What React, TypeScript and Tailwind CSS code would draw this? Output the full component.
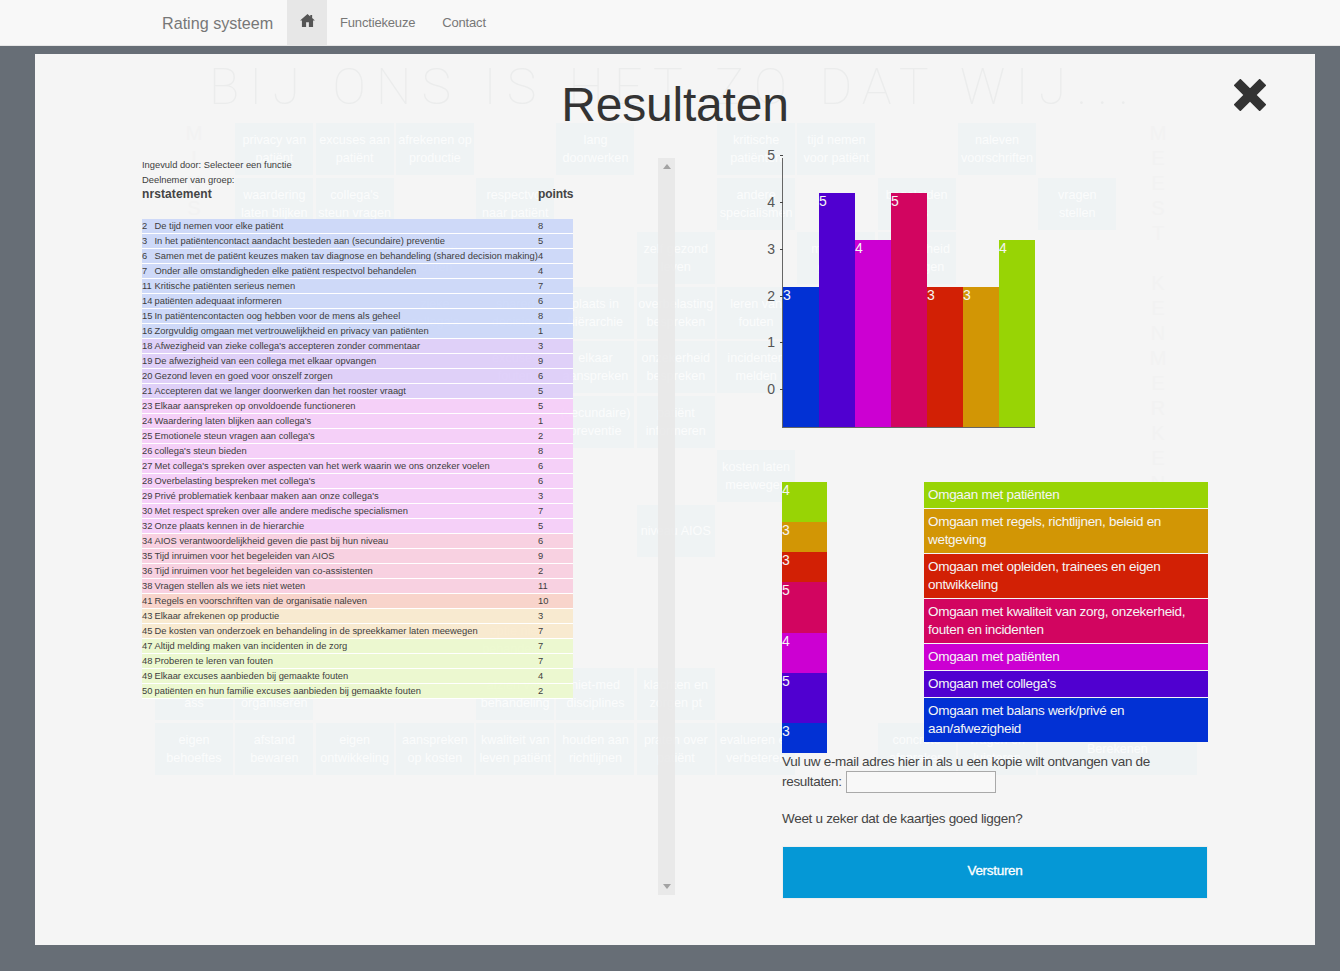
import React from "react";

const C = {
  blue: "bg-[#0231d4]",
  purple: "bg-[#5000d0]",
  magenta: "bg-[#cc00d2]",
  crimson: "bg-[#d20560]",
  red: "bg-[#d22005]",
  orange: "bg-[#d29605]",
  green: "bg-[#98d405]",
};

const R = {
  b: "bg-[#cad6f8]/90",
  p: "bg-[#ddccf8]/90",
  m: "bg-[#f5ccf8]/90",
  c: "bg-[#f8cddf]/90",
  r: "bg-[#f8d0c6]/90",
  o: "bg-[#f8e9cc]/90",
  g: "bg-[#ebf8cc]/90",
};

const rows: [string, string, string, keyof typeof R][] = [
  ["2", "De tijd nemen voor elke patiënt", "8", "b"],
  ["3", "In het patiëntencontact aandacht besteden aan (secundaire) preventie", "5", "b"],
  ["6", "Samen met de patiënt keuzes maken tav diagnose en behandeling (shared decision making)", "4", "b"],
  ["7", "Onder alle omstandigheden elke patiënt respectvol behandelen", "4", "b"],
  ["11", "Kritische patiënten serieus nemen", "7", "b"],
  ["14", "patiënten adequaat informeren", "6", "b"],
  ["15", "In patiëntencontacten oog hebben voor de mens als geheel", "8", "b"],
  ["16", "Zorgvuldig omgaan met vertrouwelijkheid en privacy van patiënten", "1", "b"],
  ["18", "Afwezigheid van zieke collega's accepteren zonder commentaar", "3", "p"],
  ["19", "De afwezigheid van een collega met elkaar opvangen", "9", "p"],
  ["20", "Gezond leven en goed voor onszelf zorgen", "6", "p"],
  ["21", "Accepteren dat we langer doorwerken dan het rooster vraagt", "5", "p"],
  ["23", "Elkaar aanspreken op onvoldoende functioneren", "5", "m"],
  ["24", "Waardering laten blijken aan collega's", "1", "m"],
  ["25", "Emotionele steun vragen aan collega's", "2", "m"],
  ["26", "collega's steun bieden", "8", "m"],
  ["27", "Met collega's spreken over aspecten van het werk waarin we ons onzeker voelen", "6", "m"],
  ["28", "Overbelasting bespreken met collega's", "6", "m"],
  ["29", "Privé problematiek kenbaar maken aan onze collega's", "3", "m"],
  ["30", "Met respect spreken over alle andere medische specialismen", "7", "m"],
  ["32", "Onze plaats kennen in de hierarchie", "5", "m"],
  ["34", "AIOS verantwoordelijkheid geven die past bij hun niveau", "6", "c"],
  ["35", "Tijd inruimen voor het begeleiden van AIOS", "9", "c"],
  ["36", "Tijd inruimen voor het begeleiden van co-assistenten", "2", "c"],
  ["38", "Vragen stellen als we iets niet weten", "11", "c"],
  ["41", "Regels en voorschriften van de organisatie naleven", "10", "r"],
  ["43", "Elkaar afrekenen op productie", "3", "o"],
  ["45", "De kosten van onderzoek en behandeling in de spreekkamer laten meewegen", "7", "o"],
  ["47", "Altijd melding maken van incidenten in de zorg", "7", "g"],
  ["48", "Proberen te leren van fouten", "7", "g"],
  ["49", "Elkaar excuses aanbieden bij gemaakte fouten", "4", "g"],
  ["50", "patiënten en hun familie excuses aanbieden bij gemaakte fouten", "2", "g"],
];

const tiles: [number, number, string, string, number?][] = [
  [1, 0, "privacy van", "patiënt"],
  [2, 0, "excuses aan", "patiënt"],
  [3, 0, "afrekenen op", "productie"],
  [5, 0, "lang", "doorwerken"],
  [7, 0, "kritische", "patiënten"],
  [8, 0, "tijd nemen", "voor patiënt"],
  [10, 0, "naleven", "voorschriften"],
  [1, 1, "waardering", "laten blijken"],
  [2, 1, "collega's", "steun vragen"],
  [4, 1, "respectvol", "naar patiënt"],
  [7, 1, "andere", "specialismen"],
  [9, 1, "begeleiden", "aios"],
  [11, 1, "vragen", "stellen"],
  [2, 2, "bespreken", "werk"],
  [3, 2, "omgaan", "fouten"],
  [6, 2, "zelf gezond", "leven"],
  [8, 2, "mens als", "geheel"],
  [9, 2, "afwezigheid", "opvangen"],
  [3, 3, "zieke", "collega's"],
  [4, 3, "shared", "decision"],
  [5, 3, "plaats in", "hiërarchie"],
  [6, 3, "overbelasting", "bespreken"],
  [7, 3, "leren van", "fouten"],
  [4, 4, "excuses", "fouten"],
  [5, 4, "elkaar", "aanspreken"],
  [6, 4, "onzekerheid", "bespreken"],
  [7, 4, "incidenten", "melden"],
  [8, 4, "collega's", "steun bieden"],
  [5, 5, "(secundaire)", "preventie"],
  [6, 5, "patiënt", "informeren"],
  [7, 6, "kosten laten", "meewegen"],
  [6, 7, "niveau AIOS", ""],
  [1, 8, "melding", "maken"],
  [4, 9, "optie niet", "behandelen"],
  [0, 10, "opleiden", "ass"],
  [1, 10, "werk", "organiseren"],
  [4, 10, "afzien van", "behandeling"],
  [5, 10, "niet-med", "disciplines"],
  [6, 10, "klachten en", "zorgen pt"],
  [0, 11, "eigen", "behoeftes"],
  [1, 11, "afstand", "bewaren"],
  [2, 11, "eigen", "ontwikkeling"],
  [3, 11, "aanspreken", "op kosten"],
  [4, 11, "kwaliteit van", "leven patiënt"],
  [5, 11, "houden aan", "richtlijnen"],
  [6, 11, "praten over", "patiënt"],
  [7, 11, "evalueren en", "verbeteren"],
  [9, 11, "concrete", "afspraken"],
  [10, 11, "vragen en", "luisteren"],
  [11, 11, "Berekenen", "", 2],
];

const bars = [
  { c: C.blue, h: "h-[140px]", v: "3" },
  { c: C.purple, h: "h-[234px]", v: "5" },
  { c: C.magenta, h: "h-[187px]", v: "4" },
  { c: C.crimson, h: "h-[234px]", v: "5" },
  { c: C.red, h: "h-[140px]", v: "3" },
  { c: C.orange, h: "h-[140px]", v: "3" },
  { c: C.green, h: "h-[187px]", v: "4" },
];

const ticks = [
  { v: "5", t: "top-[-12px]" },
  { v: "4", t: "top-[35px]" },
  { v: "3", t: "top-[82px]" },
  { v: "2", t: "top-[129px]" },
  { v: "1", t: "top-[175px]" },
  { v: "0", t: "top-[222px]" },
];

const stack = [
  { c: C.green, h: "h-[40px]", v: "4" },
  { c: C.orange, h: "h-[30px]", v: "3" },
  { c: C.red, h: "h-[30px]", v: "3" },
  { c: C.crimson, h: "h-[51px]", v: "5" },
  { c: C.magenta, h: "h-[40px]", v: "4" },
  { c: C.purple, h: "h-[50px]", v: "5" },
  { c: C.blue, h: "h-[30px]", v: "3" },
];

const legend = [
  { c: C.green, t: "Omgaan met patiënten" },
  { c: C.orange, t: "Omgaan met regels, richtlijnen, beleid en wetgeving" },
  { c: C.red, t: "Omgaan met opleiden, trainees en eigen ontwikkeling" },
  { c: C.crimson, t: "Omgaan met kwaliteit van zorg, onzekerheid, fouten en incidenten" },
  { c: C.magenta, t: "Omgaan met patiënten" },
  { c: C.purple, t: "Omgaan met collega's" },
  { c: C.blue, t: "Omgaan met balans werk/privé en aan/afwezigheid" },
];

function Ghost() {
  return (
    <div className="absolute inset-0 overflow-hidden select-none" aria-hidden="true">
      <div className="absolute left-[174px] top-[8px] whitespace-nowrap font-['Roboto',sans-serif] font-thin text-[50px] leading-[50px] tracking-[10.2px] text-[#ebecec]">
        BIJ ONS IS HET ZO DAT WIJ...
      </div>
      <div className="absolute left-[120px] top-[69px] grid grid-cols-[repeat(13,78px)] auto-rows-[52px] gap-x-[2.3px] gap-y-[2.5px]">
        {tiles.map(([c, r, a, b, span], i) => (
          <div
            key={i}
            className="flex flex-col items-center justify-center bg-[#eff3f4] text-center text-[12.6px] leading-[18px] text-[#fbfcfc] whitespace-nowrap"
            style={{ gridColumn: `${c + 1} / span ${span ?? 1}`, gridRow: r + 1 }}
          >
            <span>{a}</span>
            {b && <span>{b}</span>}
          </div>
        ))}
      </div>
      <div className="absolute left-[120px] top-[67px] flex w-[78px] flex-col items-center text-[20px] leading-[25px] text-[#f2f2f2]">
        {"MINST KENMERKEND".split("").map((l, i) => (
          <span key={i} className="h-[25px]">{l}</span>
        ))}
      </div>
      <div className="absolute left-[1084px] top-[67px] flex w-[78px] flex-col items-center text-[20px] leading-[25px] text-[#f2f2f2]">
        {"MEEST KENMERKEND".split("").map((l, i) => (
          <span key={i} className="h-[25px]">{l}</span>
        ))}
      </div>
    </div>
  );
}

export default function App() {
  return (
    <div className="flex h-[971px] w-[1340px] flex-col overflow-hidden bg-[#676e76] font-['Liberation_Sans',Arial,sans-serif] text-[#333]">
      <nav className="flex h-[46px] shrink-0 items-start border-b border-[#e7e7e7] bg-[#f8f8f8] pl-[162px] text-[#777]">
        <a className="mr-[14px] w-[111px] whitespace-nowrap text-[16.15px] leading-[47px]">Rating systeem</a>
        <a className="flex h-[45px] w-[40px] items-start justify-center bg-[#e7e7e7] pt-[14px] text-[#555]">
          <svg viewBox="0 0 16 14" className="h-[13px] w-[15px]" fill="currentColor">
            <path d="M8 0 L11 2.6 V1 H13 V4.4 L16 7 H14 V14 H9.5 V9 H6.5 V14 H2 V7 H0 Z" />
          </svg>
        </a>
        <a className="ml-[13px] text-[13px] leading-[45px] tracking-[-0.17px]">Functiekeuze</a>
        <a className="ml-[27px] text-[13px] leading-[45px] tracking-[-0.17px]">Contact</a>
      </nav>

      <div className="flex flex-1 flex-col pb-[26px] pl-[35px] pr-[25px] pt-[8px]">
        <div className="relative flex-1 bg-[#f5f5f5] pl-[107px]">
          <Ghost />
          <button className="absolute right-[49px] top-[25px] text-[#333]" aria-label="Sluiten">
            <svg viewBox="0 0 32 32" className="size-[32px]" fill="none" stroke="currentColor" strokeWidth="9.5">
              <path d="M3 3 L29 29 M29 3 L3 29" />
            </svg>
          </button>

          <div className="relative flex h-[104px] justify-center overflow-hidden pr-[107px] pt-[24px]">
            <h1 className="text-[48px] leading-[54px] text-[#333] tracking-[-0.2px]">Resultaten</h1>
          </div>

          <div className="relative flex gap-[107px]">
            <div className="flex h-[737px] w-[533px]">
              <div className="w-[516px] text-[9.35px] leading-[14px] text-[#3d3d3d]">
                <p className="h-[14.5px]">Ingevuld door: Selecteer een functie</p>
                <p className="h-[14.5px]">Deelnemer van groep:</p>
                <div className="flex h-[32px] w-[431px] items-start text-[12px] font-bold leading-[15px] text-[#444]">
                  <span className="w-[396px] shrink-0 tracking-[0.1px]">nrstatement</span>
                  <span className="shrink-0 tracking-[-0.1px]">points</span>
                </div>
                <div className="w-[431px]">
                  {rows.map(([n, s, p, k]) => (
                    <div key={n} className={`flex h-[15px] border-b border-white leading-[14px] whitespace-nowrap ${R[k]}`}>
                      <span className="w-[12.5px] shrink-0">{n}</span>
                      <span className="w-[383.5px] shrink-0">{s}</span>
                      <span>{p}</span>
                    </div>
                  ))}
                </div>
              </div>
              <div className="flex w-[17px] flex-col items-center justify-between bg-[#e8e8e8]/90 py-[6px]">
                <span className="h-0 w-0 border-x-[4px] border-b-[5px] border-x-transparent border-b-[#a3a3a3]" />
                <span className="h-0 w-0 border-x-[4px] border-t-[5px] border-x-transparent border-t-[#a3a3a3]" />
              </div>
            </div>

            <div className="w-[426px]">
              <div className="relative flex h-[270px] w-[253px] items-end border-b border-l border-[#666]">
                {ticks.map((t) => (
                  <div key={t.v} className={`absolute right-full flex items-center text-[14px] leading-[18px] text-[#555] ${t.t}`}>
                    <span>{t.v}</span>
                    <span className="ml-[5px] h-px w-[3px] bg-[#444]" />
                  </div>
                ))}
                {bars.map((b, i) => (
                  <div key={i} className={`w-[36px] shrink-0 text-[14px] leading-[16px] text-[#f5f5f5] ${b.c} ${b.h}`}>
                    {b.v}
                  </div>
                ))}
              </div>

              <div className="mt-[54px] flex items-start">
                <div className="w-[45px] shrink-0">
                  {stack.map((s, i) => (
                    <div key={i} className={`text-[14px] leading-[16px] text-[#f5f5f5] ${s.c} ${s.h}`}>
                      {s.v}
                    </div>
                  ))}
                </div>
                <div className="ml-[97px] w-[284px]">
                  {legend.map((l, i) => (
                    <div key={i} className={`mb-px px-[4px] py-[4px] text-[13.5px] leading-[18px] tracking-[-0.3px] text-[#f5f5f5] ${l.c}`}>
                      {l.t}
                    </div>
                  ))}
                </div>
              </div>

              <div className="-mt-px text-[13.5px] leading-[19px] tracking-[-0.3px] text-[#444]">
                <p>
                  Vul uw e-mail adres hier in als u een kopie wilt ontvangen van de resultaten:{" "}
                  <input className="ml-px h-[22px] w-[150px] border border-[#a9a9a9] bg-[#f8f8f8] align-middle" />
                </p>
                <p className="mt-[16px]">Weet u zeker dat de kaartjes goed liggen?</p>
              </div>
              <button className="mt-[18px] h-[53px] w-[426px] border border-[#eee] bg-[#0598d6] pb-[3px] text-[13.5px] tracking-[-0.3px] text-white [-webkit-text-stroke:0.3px_white]">
                Versturen
              </button>
            </div>
          </div>
        </div>
      </div>
    </div>
  );
}
